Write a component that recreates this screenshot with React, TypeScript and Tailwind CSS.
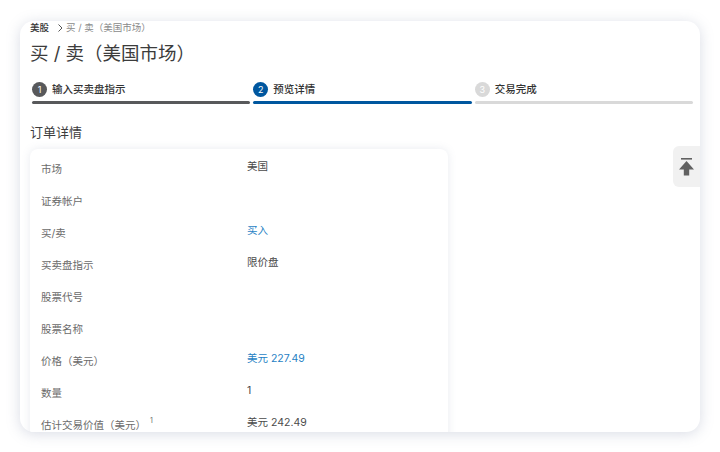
import React from 'react';

const font = { fontFamily: '"Inter", "Noto Sans CJK SC", sans-serif' };

const rows: { label: string; value?: string; blue?: boolean; sup?: string }[] = [
  { label: '市场', value: '美国' },
  { label: '证券帐户' },
  { label: '买/卖', value: '买入', blue: true },
  { label: '买卖盘指示', value: '限价盘' },
  { label: '股票代号' },
  { label: '股票名称' },
  { label: '价格（美元）', value: '美元 227.49', blue: true },
  { label: '数量', value: '1' },
  { label: '估计交易价值（美元）', value: '美元 242.49', sup: '1' },
];

const steps = [
  { n: '1', label: '输入买卖盘指示', circle: 'bg-[#58595b] text-white', bar: 'bg-[#58595b]' },
  { n: '2', label: '预览详情', circle: 'bg-[#00579f] text-white', bar: 'bg-[#00579f]' },
  { n: '3', label: '交易完成', circle: 'bg-[#d9d9d9] text-white', bar: 'bg-[#d9d9d9]' },
];

export default function App() {
  return (
    <div className="w-[720px] h-[452px] bg-white px-5 pt-[21px] overflow-hidden" style={font}>
      <div className="relative h-[411px] overflow-hidden rounded-[14px] bg-white shadow-[0_2px_14px_rgba(120,130,160,0.28)]">
        <div className="pl-[10px] pr-[7px]">
          <div className="flex items-center h-[14px] text-[9.5px] leading-[14px]">
            <span className="text-[#333] font-medium">美股</span>
            <svg width="7" height="8" viewBox="0 0 7 8" className="ml-[8px] mr-[2px]" fill="none" stroke="#555" strokeWidth="1">
              <path d="M1.5 0.5 5 4 1.5 7.5" />
            </svg>
            <span className="text-[#8a8a8a]">买 / 卖（美国市场）</span>
          </div>
          <h1 className="mt-[4px] text-[18.5px] leading-[28px] text-[#3c3c3c] font-normal">买 / 卖（美国市场）</h1>

          <div className="mt-[15px] grid grid-cols-3 gap-[3px] pl-[2px]">
            {steps.map((s) => (
              <div key={s.n}>
                <div className="flex items-center h-[15px] gap-[5px]">
                  <span className={`flex items-center justify-center w-[15px] h-[15px] rounded-full text-[9px] ${s.circle}`}>{s.n}</span>
                  <span className="text-[10.5px] font-medium leading-[16px] pt-[1px] text-[#333]">{s.label}</span>
                </div>
                <div className={`mt-[4px] h-[3px] rounded-full ${s.bar}`} />
              </div>
            ))}
          </div>

          <h2 className="mt-[19px] text-[13px] leading-[18px] text-[#3c3c3c] font-normal">订单详情</h2>

          <div className="mt-[8px] w-[418px] rounded-[8px] bg-white pl-[11px] pt-[5px] pb-4 shadow-[0_0_8px_rgba(120,130,160,0.16)]">
            {rows.map((r) => (
              <div key={r.label} className="flex h-[32px] text-[10.5px]">
                <div className="w-[206px] pt-[4px] leading-[24px] text-[#6b6b6b]">
                  {r.label}
                  {r.sup && <sup className="ml-[4px] -top-[6px] text-[7px] text-[#6b6b6b]">{r.sup}</sup>}
                </div>
                <div className={`leading-[24px] pt-[1px] ${r.blue ? 'text-[#1f7fc4]' : 'text-[#4a4a4a]'}`}>{r.value}</div>
              </div>
            ))}
          </div>
        </div>

        <div className="absolute right-0 top-[125px] flex h-[41px] w-[27px] items-center justify-center rounded-l-[6px] bg-[#f1f1f1]">
          <svg width="15" height="18" viewBox="0 0 15 18" fill="#616161">
            <rect x="2" y="0" width="11" height="1.6" />
            <path d="M7.5 3 15 11.5H10.2V17.5H4.8V11.5H0Z" />
          </svg>
        </div>
      </div>
    </div>
  );
}
